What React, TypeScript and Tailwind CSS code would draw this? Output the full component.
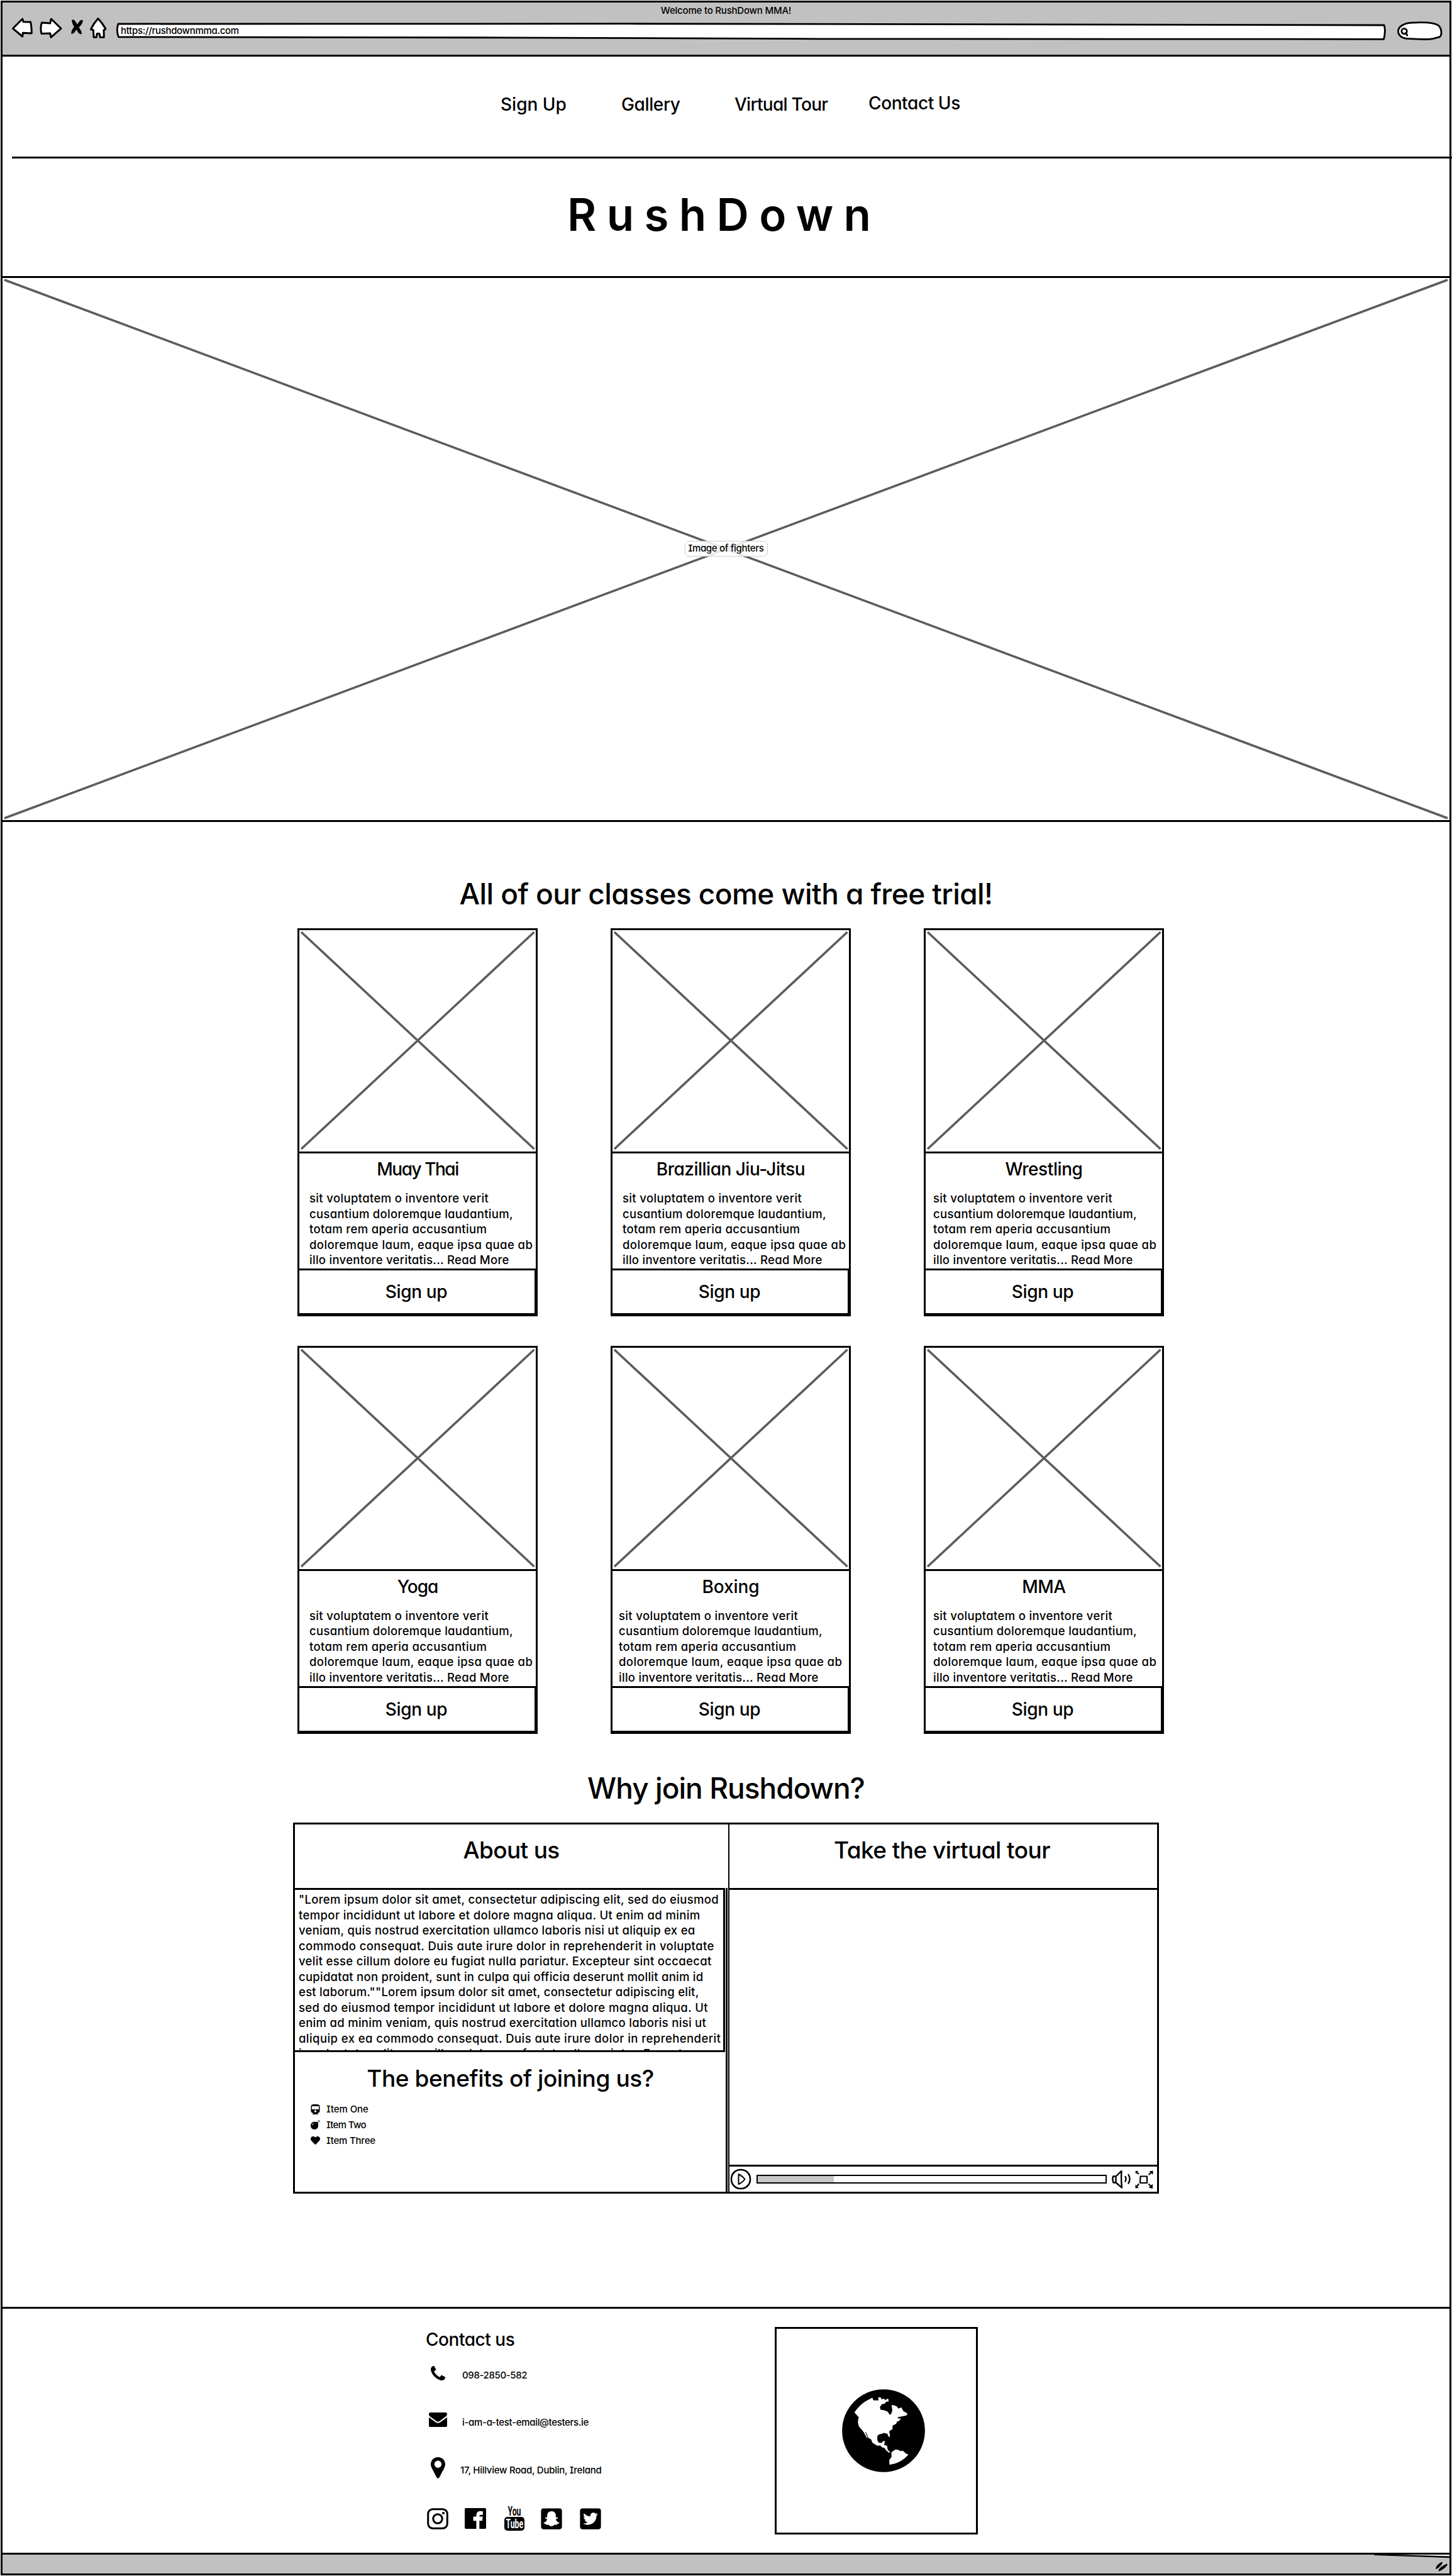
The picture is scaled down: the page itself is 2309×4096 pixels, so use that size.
import { FaBomb, FaHeart, FaSnapchatSquare, FaTrain, FaTwitterSquare } from 'react-icons/fa';

const CLASSES = [
  { name: 'Muay Thai', inset: 'pl-[16px]', tracking: 'tracking-[-0.052em]' },
  { name: 'Brazillian Jiu-Jitsu', inset: 'pl-[16px]', tracking: 'tracking-[-0.018em]' },
  { name: 'Wrestling', inset: 'pl-[12px]', tracking: 'tracking-[-0.015em]' },
  { name: 'Yoga', inset: 'pl-[16px]', tracking: 'tracking-[-0.036em]' },
  { name: 'Boxing', inset: 'pl-[10px]', tracking: 'tracking-[-0.004em]' },
  { name: 'MMA', inset: 'pl-[12px]', tracking: 'tracking-[-0.02em]' },
];

const BLURB = [
  { text: 'sit voluptatem o inventore verit', tracking: 'tracking-[0.0192em]' },
  { text: 'cusantium doloremque laudantium,', tracking: 'tracking-[0.0166em]' },
  { text: 'totam rem aperia accusantium', tracking: 'tracking-[0.0192em]' },
  { text: 'doloremque laum, eaque ipsa quae ab', tracking: 'tracking-[0.0225em]' },
  { text: 'illo inventore veritatis... Read More', tracking: 'tracking-[0.0155em]' },
];

const ABOUT = [
  { text: '"Lorem ipsum dolor sit amet, consectetur adipiscing elit, sed do eiusmod', tracking: 'tracking-[0.0174em]' },
  { text: 'tempor incididunt ut labore et dolore magna aliqua. Ut enim ad minim', tracking: 'tracking-[0.0203em]' },
  { text: 'veniam, quis nostrud exercitation ullamco laboris nisi ut aliquip ex ea', tracking: 'tracking-[0.0153em]' },
  { text: 'commodo consequat. Duis aute irure dolor in reprehenderit in voluptate', tracking: 'tracking-[0.0217em]' },
  { text: 'velit esse cillum dolore eu fugiat nulla pariatur. Excepteur sint occaecat', tracking: 'tracking-[0.0173em]' },
  { text: 'cupidatat non proident, sunt in culpa qui officia deserunt mollit anim id', tracking: 'tracking-[0.0138em]' },
  { text: 'est laborum.""Lorem ipsum dolor sit amet, consectetur adipiscing elit,', tracking: 'tracking-[0.0141em]' },
  { text: 'sed do eiusmod tempor incididunt ut labore et dolore magna aliqua. Ut', tracking: 'tracking-[0.0209em]' },
  { text: 'enim ad minim veniam, quis nostrud exercitation ullamco laboris nisi ut', tracking: 'tracking-[0.0159em]' },
  { text: 'aliquip ex ea commodo consequat. Duis aute irure dolor in reprehenderit', tracking: 'tracking-[0.0231em]' },
  { text: 'in voluptate velit esse cillum dolore eu fugiat nulla pariatur. Excepteur', tracking: 'tracking-[0.0175em]' },
];

function Lines({ lines }: { lines: { text: string; tracking: string }[] }) {
  return lines.map(({ text, tracking }) => (
    <span key={text} className={`block whitespace-nowrap ${tracking}`}>{text}</span>
  ));
}

function Cross() {
  return (
    <svg className="absolute inset-0 h-full w-full" viewBox="0 0 376 352" preserveAspectRatio="none" stroke="#5c5c5e" strokeWidth="3.6">
      <path d="M3 3 373.500 348M373.500 3 3 348" />
    </svg>
  );
}

function ClassCard({ name, inset, tracking }: { name: string; inset: string; tracking: string }) {
  return (
    <article className="flex h-[617px] flex-col">
      <div className="relative h-[358px] shrink-0 border-[3px] border-black"><Cross /></div>
      <div className="h-[183px] shrink-0 border-x-[3px] border-black pt-[7px]">
        <h3 className={`text-center text-[28px] leading-[36px] ${tracking}`}>{name}</h3>
        <p className={`mt-[16px] text-[18.5px] leading-[24.5px] font-[480] ${inset}`}><Lines lines={BLURB} /></p>
      </div>
      <button className="h-[76px] shrink-0 border-t-[3px] border-r-[5px] border-b-[5px] border-l-[3px] border-black pr-[2px] text-center text-[28px] leading-[66px] tracking-[-0.013em]">
        Sign up
      </button>
    </article>
  );
}

function BrowserBar() {
  return (
    <header className="h-[86px] shrink-0 border-b-[3px] border-black bg-[#c1c1c1]">
      <div className="h-[23px] pt-[1px] text-center text-[15px] leading-[23px] tracking-[-0.0136em]">Welcome to RushDown MMA!</div>
      <div className="flex items-start">
        <svg className="ml-[14px] h-[35px] w-[35px]" viewBox="18 27 35 35" fill="#fff" stroke="#000" strokeWidth="3" strokeLinejoin="round">
          <path d="M20.500 45.300 35.700 30 37.200 34.700 48.700 35Q50.500 44 50.300 53L36.400 52.200 35.700 58Z" />
        </svg>
        <svg className="ml-[9px] h-[35px] w-[38px]" viewBox="62 27 38 35" fill="#fff" stroke="#000" strokeWidth="3" strokeLinejoin="round">
          <path d="M97 45.300 81.300 30 79.800 37 66.500 36Q63.500 44 66 53.500L79.800 53 81 59.300Z" />
        </svg>
        <svg className="ml-[12px] h-[35px] w-[21px]" viewBox="112 27 21 35">
          <path d="M114 31.500Q118 30 120.500 35L123 38.500 127 33Q130 31 132 32.500 131.500 38 125.500 43.500L129.500 50 130 54Q126 55 123.500 50.500L121.500 47 118 52Q115.500 54.500 113.200 53.500 113.500 47 118 43L115 37Z" />
        </svg>
        <svg className="ml-[9px] h-[35px] w-[29px]" viewBox="142 27 29 35" fill="#fff" stroke="#000" strokeWidth="3" strokeLinejoin="round">
          <path d="M156 29.500Q163 37 168 46L165 48 165.300 59.300H159.300L158 53.500H154.300L153.300 59.300H149L148.500 48 144.500 46.500Q149 37 156 29.500Z" />
        </svg>
        <div className="relative mt-[8px] ml-[14px] h-[30px] w-[2020px]">
          <svg className="absolute inset-0 h-full w-full" viewBox="185 35 2020 30" fill="#fff" stroke="#000" strokeWidth="2.800" strokeLinejoin="round">
            <path d="M188 38 1000 37.700 2201 40Q2204 49 2200.500 62.300L1300 61.800 800 59.800 188.500 58.800Q184.500 48 188 38Z" />
          </svg>
          <div className="relative pl-[7px] text-[15px] leading-[27px] tracking-[-0.02em]">https://rushdownmma.com</div>
        </div>
        <svg className="mt-[6px] ml-[16px] h-[32px] w-[74px]" viewBox="880 165 370 160" fill="none" stroke="#000" strokeWidth="14" strokeLinecap="round">
          <path fill="#fff" d="M892 250C892 215 930 185 1000 181 1080 176 1180 178 1215 205Q1236 226 1235 265 1234 285 1222 293 1180 308 1140 312C1070 315 1000 307 960 307 915 303 892 275 892 250Z" />
          <circle cx="940" cy="248" r="21" />
          <path d="M953 262 964 282" />
        </svg>
      </div>
    </header>
  );
}

function Hero() {
  return (
    <section className="relative flex h-[868px] shrink-0 items-center justify-center border-y-[3px] border-black">
      <svg className="absolute inset-0 h-full w-full" viewBox="0 0 2301 862" preserveAspectRatio="none" stroke="#5c5c5e" strokeWidth="3.6">
        <path d="M3 3 2298 859M2298 3 3 859" />
      </svg>
      <div className="relative mb-[2px] h-[25px] w-[132px] rounded-[7px] border border-[#cfcfcf] bg-white/85 text-center text-[15px] leading-[22px] tracking-[-0.022em] whitespace-nowrap">
        Image of fighters
      </div>
    </section>
  );
}

function PlayerControls() {
  return (
    <div className="flex h-[43px] items-center border-t-[3px] border-black">
      <svg className="ml-px h-[34px] w-[34px]" viewBox="0 0 34 34" fill="none" stroke="#000" strokeWidth="2.600">
        <rect x="2" y="2" width="30" height="30" rx="14.500" />
        <path strokeWidth="2" strokeLinejoin="round" d="M13.500 9V25Q20 22 23.500 17 20 12.500 13.500 9Z" />
      </svg>
      <div className="ml-[8px] h-[14px] w-[557px] border-[2.5px] border-black bg-white"><div className="h-full w-[121px] bg-[#c8c8c8]" /></div>
      <svg className="ml-[8px] h-[30px] w-[32px]" viewBox="0 0 32 30" fill="none" stroke="#000" strokeWidth="2.400" strokeLinejoin="round" strokeLinecap="round">
        <path d="M2 10.500H6.500V20.500H2.500Q0.500 15 2 10.500ZM6.500 10.500 15.500 2Q14.500 15 16 28.500L6.500 20.500M21.500 11Q23.500 14.500 21.500 18.500M26.500 8Q30.500 15 26.500 21.500" />
      </svg>
      <svg className="ml-[5px] h-[29px] w-[29px]" viewBox="0 0 29 29" fill="none" stroke="#000" strokeWidth="2.200" strokeLinejoin="round">
        <path d="M8.500 9.500H19V20H8Z" />
        <path d="M1.500 2 6 6M27.500 2 21.500 7M1.500 27 6 21.500M27.500 27.500 21.500 21.500" />
        <path fill="#000" strokeWidth="1" d="M1 1.500H4.500L1.500 5ZM28 1V6L23.500 2ZM1 28V23.500L5 27.500ZM27.500 28.500V22.500L22.500 27Z" />
      </svg>
    </div>
  );
}

function InfoPanel() {
  return (
    <section className="mt-[27px] ml-[462px] flex h-[590px] w-[1377px] shrink-0 border-[3px] border-black">
      <div className="w-[688px]">
        <h2 className="h-[101px] pt-[19px] text-center text-[37px] leading-[44px] tracking-[-0.018em]">About us</h2>
        <div className="h-[483px] border-r-[3px] border-black">
          <div className="-ml-[3px] h-[261px] w-[687px] border-[3px] border-black">
            <div className="h-[258px] overflow-hidden pt-[3px] pl-[6px] text-[18.5px] leading-[24.5px] font-[480]"><Lines lines={ABOUT} /></div>
          </div>
          <h2 className="mt-[20px] text-center text-[37px] leading-[44px] tracking-[-0.011em]">The benefits of joining us?</h2>
          <ul className="mt-[14px] pl-[25px] text-[15px] leading-[25px]">
            <li className="flex items-center gap-[10px] tracking-[-0.006em]"><FaTrain className="h-[16px] w-[15px]" />Item One</li>
            <li className="flex items-center gap-[10px] tracking-[-0.045em]"><FaBomb className="h-[15px] w-[15px]" />Item Two</li>
            <li className="flex items-center gap-[10px] tracking-[-0.015em]"><FaHeart className="h-[15px] w-[15px]" />Item Three</li>
          </ul>
        </div>
      </div>
      <div className="ml-px flex w-[682px] flex-col border-l-2 border-black">
        <h2 className="h-[101px] pt-[19px] pr-[4px] text-center text-[37px] leading-[44px] tracking-[-0.015em]">Take the virtual tour</h2>
        <div className="-mr-px flex-1 border-t-[3px] border-r border-black" />
        <PlayerControls />
      </div>
    </section>
  );
}

function InstagramIcon() {
  return (
    <svg className="h-[34px] w-[34px]" viewBox="0 0 34 34" fill="none" stroke="#000">
      <rect x="1.700" y="1.700" width="30.600" height="30.600" rx="7.500" strokeWidth="3" />
      <circle cx="17" cy="17" r="7.200" strokeWidth="3" />
      <circle cx="26" cy="8" r="2.100" fill="#000" stroke="none" />
    </svg>
  );
}

function FacebookIcon() {
  return (
    <svg className="ml-[26px] h-[33px] w-[34px]" viewBox="378 1334 140 136" preserveAspectRatio="none">
      <rect x="378" y="1334" width="140" height="136" rx="7" />
      <path fill="#fff" d="M454 1470V1417H434V1390H454V1382Q455 1354 480 1354L497 1356V1378H486Q474 1378 474 1388V1390H496L493 1417H474V1470Z" />
    </svg>
  );
}

function YoutubeIcon() {
  return (
    <svg className="ml-[29px] h-[39px] w-[32px] overflow-visible" viewBox="0 0 32 39">
      <text x="5.500" y="15" fontSize="20" fontWeight="700" fontFamily="Roboto, sans-serif" textLength="21" lengthAdjust="spacingAndGlyphs">You</text>
      <rect y="17" width="32" height="22" rx="5" />
      <text x="2.500" y="35" fontSize="20" fontWeight="700" fontFamily="Roboto, sans-serif" fill="#fff" textLength="27.500" lengthAdjust="spacingAndGlyphs">Tube</text>
    </svg>
  );
}

function Globe() {
  return (
    <svg className="h-[132px] w-[132px]" viewBox="584 499 523 477" preserveAspectRatio="none">
      <ellipse cx="845.500" cy="737.500" rx="261" ry="238" />
      <path
        fill="#fff"
        d="M662 632C690 598 715 575 745 562L775 548 782 563 815 563 811 548Q820 542 830 548L832 558 845 553 860 562 866 554 877 556 877 570 862 570 855 580 835 586 823 600 826 616 850 620 872 628 884 645 894 641 901 620 896 590 915 592 933 600 937 610 958 604 970 625 996 638 990 650 965 654 936 660 935 666 955 668 945 680 930 686 925 698 903 708 902 728 880 742 886 760 884 775 875 768 870 755 845 750 838 755 820 757 807 766 806 790 815 806 835 808 840 798 855 797 849 820 868 824 872 848 888 860 880 864 862 850 852 837 835 832 825 822 805 823 775 806 768 788 750 778 733 744 730 746 744 776 742 782 720 745 690 712 684 690 687 664 693 664ZM895 862 905 855 922 845 938 848 955 855 968 852 985 868 1002 875C970 908 930 928 883 933L882 905 896 888Z"
      />
    </svg>
  );
}

function Footer() {
  return (
    <footer className="mt-[180px] flex h-[391px] shrink-0 border-t-[3px] border-black">
      <div className="ml-[674px] w-[554px] pt-[31px]">
        <h3 className="-ml-px text-[28px] leading-[36px] tracking-[-0.0165em]">Contact us</h3>
        <div className="mt-[24px] text-[15px] leading-[21px]">
          <div className="flex h-[74px]">
            <div className="flex w-[37px] justify-center">
              <svg className="h-[23px] w-[23px]" viewBox="192 128 1408 1408">
                <path d="M1600 1240q0 27-10 70.500t-21 68.500q-21 50-122 106-94 51-186 51-27 0-53-3.500t-57.500-12.500-47-14.500-55.500-20.500-49-18q-98-35-175-83-127-79-264-216t-216-264q-48-77-83-175-3-9-18-49t-20.500-55.500-14.500-47-12.500-57.500-3.500-53q0-92 51-186 56-101 106-122 25-11 68.500-21t70.500-10q14 0 21 3 18 6 53 76 11 19 30 54t35 63.500 31 53.500q3 4 17.500 25t21.500 35.500 7 28.500q0 20-28.500 50t-62 55-62 53-28.500 46q0 9 5 22.500t8.500 20.500 14 24 11.500 19q76 137 174 235t235 174q2 1 19 11.500t24 14 20.500 8.500 22.500 5q18 0 46-28.500t53-62 55-62 50-28.500q14 0 28.500 7t35.500 21.500 25 17.500q25 15 53.500 31t63.500 35 54 30q70 35 76 53 3 7 3 21z" />
              </svg>
            </div>
            <div className="mt-[4px] ml-[20px] tracking-[-0.025em]">098-2850-582</div>
          </div>
          <div className="flex h-[71px]">
            <div className="flex w-[37px] justify-center">
              <svg className="h-[23px] w-[29px]" viewBox="136 711 122 93" preserveAspectRatio="none">
                <path d="M136 723Q136 711 146 711H248Q258 711 258 723 257 730 250 736L208 767Q197 775 186 767L143 736Q137 730 136 723ZM136 742 182 774Q197 784 212 774L258 742V795Q258 804 250 804H144Q136 804 136 795Z" />
              </svg>
            </div>
            <div className="mt-[5px] ml-[20px] tracking-[-0.021em]">i-am-a-test-email@testers.ie</div>
          </div>
          <div className="flex h-[78px]">
            <div className="flex w-[37px] justify-center">
              <svg className="h-[34px] w-[23px]" viewBox="0 0 23 34">
                <path fillRule="evenodd" d="M11.500 0C18 0 23 5 23 11.500Q23 14 21.500 17L13.800 32Q11.500 35.500 9.200 32L1.500 17Q0 14 0 11.500C0 5 5 0 11.500 0ZM11.500 5.500A5.700 5.700 0 1 0 11.500 16.900 5.700 5.700 0 1 0 11.500 5.500Z" />
              </svg>
            </div>
            <div className="mt-[10px] ml-[17px] tracking-[-0.0176em]">17, Hillview Road, Dublin, Ireland</div>
          </div>
        </div>
        <div className="flex items-center pl-px">
          <InstagramIcon />
          <FacebookIcon />
          <YoutubeIcon />
          <FaSnapchatSquare className="ml-[24px] h-[38px] w-[38px]" />
          <FaTwitterSquare className="ml-[24px] h-[38px] w-[38px]" />
        </div>
      </div>
      <div className="mt-[29px] flex h-[330px] w-[323px] items-center justify-center border-[3px] border-black pl-[22px]">
        <Globe />
      </div>
    </footer>
  );
}

export default function App() {
  return (
    <div className="h-[4096px] w-[2309px] bg-white p-px font-['Inter','Lato',sans-serif] font-[460] text-black [font-feature-settings:'cv11','cv08']">
      <div className="flex h-[4094px] flex-col border-[3px] border-black">
        <BrowserBar />
        <nav className="flex h-[159px] shrink-0 pt-[58px] pl-[792px] text-[28px] leading-[36px]">
          <div className="w-[192px]">Sign Up</div>
          <div className="w-[180px] tracking-[-0.0135em]">Gallery</div>
          <div className="w-[213px] tracking-[-0.026em]">Virtual Tour</div>
          <div className="-mt-[2px] tracking-[-0.014em]">Contact Us</div>
        </nav>
        <div className="-mr-[4px] ml-[15px] h-[3px] shrink-0 bg-black" />
        <h1 className="h-[187px] shrink-0 pt-[49px] pl-[898px] text-[71px] leading-[80px] font-semibold tracking-[0.23em]">RushDown</h1>
        <Hero />
        <h2 className="mt-[86px] h-[56px] shrink-0 text-center text-[46px] leading-[56px] tracking-[-0.0125em]">
          All of our classes come with a free trial!
        </h2>
        <div className="mt-[27px] ml-[469px] grid shrink-0 grid-cols-[repeat(3,382px)] gap-x-[116px] gap-y-[46.5px]">
          {CLASSES.map((c) => <ClassCard key={c.name} {...c} />)}
        </div>
        <h2 className="mt-[58.5px] h-[56px] shrink-0 text-center text-[46px] leading-[56px] tracking-[-0.021em]">Why join Rushdown?</h2>
        <InfoPanel />
        <Footer />
        <div className="relative flex-1 border-t-[3px] border-black bg-[#c1c1c1]">
          <svg className="absolute top-0 right-0 h-[30px] w-[120px]" viewBox="0 0 120 30">
            <path fill="#fff" d="M33 0H120V3Z" />
            <path d="M0 0H33L120 2.600V5.200L0 1Z" />
            <path d="M98.300 22.900Q98 19 102 15.500 106 11.500 108.700 11.700 109.500 13.500 106 17.500 101.500 22.500 98.300 22.900ZM102.300 26.500Q102.500 23 107 19.500 114 14.500 116.900 14.700 116.500 18 112 21.500 106 26 102.300 26.500Z" />
          </svg>
        </div>
      </div>
    </div>
  );
}
